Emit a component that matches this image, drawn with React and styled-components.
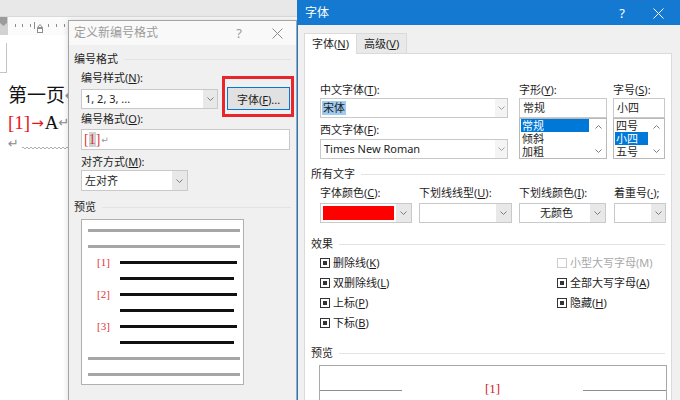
import React from "react";
import styled, { createGlobalStyle } from "styled-components";

const uiFont = `"Noto Sans", "Noto Sans CJK SC", sans-serif`;
const serifFont = `"Liberation Serif", "Noto Sans CJK SC", serif`;

const GlobalStyle = createGlobalStyle`
  * { box-sizing: border-box; }
  body { margin: 0; background: #fff; }
`;

const Chevron = ({ up, color = "#7d7d7d" }) => (
  <svg width="7" height="4" viewBox="0 0 7 4">
    <path
      d={up ? "M0.5 3.5 L3.5 0.5 L6.5 3.5" : "M0.5 0.5 L3.5 3.5 L6.5 0.5"}
      fill="none"
      stroke={color}
      strokeWidth="1"
    />
  </svg>
);

const CloseIcon = ({ color }) => (
  <svg width="11" height="11" viewBox="0 0 11 11">
    <path d="M0.5 0.5 L10.5 10.5 M10.5 0.5 L0.5 10.5" stroke={color} strokeWidth="1" />
  </svg>
);

const RulerScale = () => (
  <svg width="60" height="18" viewBox="0 0 60 18">
    {[7, 14, 22, 40, 48, 56].map((x) => (
      <line key={x} x1={x + 0.5} y1="7" x2={x + 0.5} y2="10" stroke="#8d8d8d" />
    ))}
    <line x1="26.5" y1="5" x2="26.5" y2="12" stroke="#8d8d8d" />
    <path d="M29.5 10.5 L32 7.5 L34.5 10.5 Z" fill="#fff" stroke="#8d8d8d" />
    <rect x="29.5" y="11.5" width="5" height="4" fill="#fff" stroke="#8d8d8d" />
  </svg>
);

const Squiggle = () => (
  <svg width="46" height="4" viewBox="0 0 46 4">
    <path
      d="M0 2 Q1 0 2 2 T4 2 T6 2 T8 2 T10 2 T12 2 T14 2 T16 2 T18 2 T20 2 T22 2 T24 2 T26 2 T28 2 T30 2 T32 2 T34 2 T36 2 T38 2 T40 2 T42 2 T44 2 T46 2"
      fill="none"
      stroke="#9a9a9a"
      strokeWidth="0.8"
    />
  </svg>
);

export default function App() {
  return (
    <>
      <GlobalStyle />
      <Desktop>
        <WordWindow>
          <RibbonEdge />
          <Ruler>
            <RulerMargin>
              <svg width="8" height="18" viewBox="0 0 8 18">
                <path d="M0 0 L7 0 L7 6 L3.5 9 L0 6 Z" fill="#9c9c9c" />
              </svg>
            </RulerMargin>
            <RulerScale />
          </Ruler>
          <Page>
            <CornerMark />
            <DocLine $mt={9}>
              第一页<ParaMark>↵</ParaMark>
            </DocLine>
            <DocLine>
              <RedText>[1]</RedText>
              <Arrow>→</Arrow>A<ParaMark>↵</ParaMark>
            </DocLine>
            <DocLine $small>
              <ParaMark>↵</ParaMark>
              <Squiggle />
            </DocLine>
          </Page>
        </WordWindow>

        <NumberDialog>
          <TitleBar>
            <TitleText>定义新编号格式</TitleText>
            <TitleButton $w={38}>?</TitleButton>
            <TitleButton $w={38}>
              <CloseIcon color="#8c8c8c" />
            </TitleButton>
          </TitleBar>
          <DialogBody>
            <GroupHeader $mt={7}>编号格式</GroupHeader>
            <Indent $pl={7}>
              <FieldLabel $mt={5}>
                编号样式(<Key>N</Key>):
              </FieldLabel>
              <StyleRow>
                <Combo $w={137} $h={20}>
                  <ComboValue>1, 2, 3, ...</ComboValue>
                  <ComboArrow $w={14} $dark>
                    <Chevron />
                  </ComboArrow>
                </Combo>
                <FontButton>
                  字体(<Key>F</Key>)...
                </FontButton>
              </StyleRow>
              <FieldLabel $mt={2}>
                编号格式(<Key>O</Key>):
              </FieldLabel>
              <FormatInput>
                <NumberText>
                  [<Selected>1</Selected>]
                </NumberText>
                <SmallMark>↵</SmallMark>
              </FormatInput>
              <FieldLabel $mt={5}>
                对齐方式(<Key>M</Key>):
              </FieldLabel>
              <Combo $w={107} $h={21} $mt={1}>
                <ComboValue>左对齐</ComboValue>
                <ComboArrow $w={15} $dark>
                  <Chevron />
                </ComboArrow>
              </Combo>
            </Indent>
            <GroupHeader $mt={9}>预览</GroupHeader>
            <ListPreview>
              <PreviewRow>
                <PreviewBar $w={152} $ml={6} $gray />
              </PreviewRow>
              <PreviewRow>
                <PreviewBar $w={152} $ml={6} $gray />
              </PreviewRow>
              {["[1]", "[2]", "[3]"].map((n) => (
                <React.Fragment key={n}>
                  <PreviewRow>
                    <PreviewNumber>{n}</PreviewNumber>
                    <PreviewBar $w={117} />
                  </PreviewRow>
                  <PreviewRow>
                    <PreviewNumber />
                    <PreviewBar $w={114} />
                  </PreviewRow>
                </React.Fragment>
              ))}
              <PreviewRow>
                <PreviewBar $w={152} $ml={6} $gray />
              </PreviewRow>
              <PreviewRow>
                <PreviewBar $w={152} $ml={6} $gray />
              </PreviewRow>
            </ListPreview>
          </DialogBody>
        </NumberDialog>

        <FontDialog>
          <TitleBar $active>
            <TitleText>字体</TitleText>
            <TitleButton $w={36}>?</TitleButton>
            <TitleButton $w={36}>
              <CloseIcon color="#ffffff" />
            </TitleButton>
            <TitleGap />
          </TitleBar>
          <TabList>
            <Tab $selected>
              字体(<Key>N</Key>)
            </Tab>
            <Tab>
              高级(<Key>V</Key>)
            </Tab>
          </TabList>
          <TabPanel>
            <FaceRow>
              <FieldColumn $w={188} $mr={11}>
                <FieldLabel>
                  中文字体(<Key>T</Key>):
                </FieldLabel>
                <Combo $w={188} $h={20} $mt={1}>
                  <ComboValue $pl={1}>
                    <Highlight>宋体</Highlight>
                  </ComboValue>
                  <ComboArrow $w={12}>
                    <Chevron color="#a0a0a0" />
                  </ComboArrow>
                </Combo>
                <FieldLabel $mt={5}>
                  西文字体(<Key>F</Key>):
                </FieldLabel>
                <Combo $w={188} $h={20} $mt={2}>
                  <ComboValue>Times New Roman</ComboValue>
                  <ComboArrow $w={12}>
                    <Chevron color="#a0a0a0" />
                  </ComboArrow>
                </Combo>
              </FieldColumn>
              <FieldColumn $w={88} $mr={6}>
                <FieldLabel>
                  字形(<Key>Y</Key>):
                </FieldLabel>
                <TextBox $mt={1}>常规</TextBox>
                <ListBox>
                  <ListItems>
                    <ListItem $selected>常规</ListItem>
                    <ListItem>倾斜</ListItem>
                    <ListItem>加粗</ListItem>
                  </ListItems>
                  <ScrollColumn $w={16}>
                    <Chevron up />
                    <Chevron />
                  </ScrollColumn>
                </ListBox>
              </FieldColumn>
              <FieldColumn $w={52}>
                <FieldLabel>
                  字号(<Key>S</Key>):
                </FieldLabel>
                <TextBox $mt={1}>小四</TextBox>
                <ListBox>
                  <ListItems>
                    <ListItem>四号</ListItem>
                    <ListItem $selected>小四</ListItem>
                    <ListItem>五号</ListItem>
                  </ListItems>
                  <ScrollColumn $w={15}>
                    <Chevron up />
                    <Chevron />
                  </ScrollColumn>
                </ListBox>
              </FieldColumn>
            </FaceRow>

            <GroupHeader $mt={8} $mr={6}>
              所有文字
            </GroupHeader>
            <AttrRow>
              <FieldColumn $w={92} $mr={7}>
                <FieldLabel>
                  字体颜色(<Key>C</Key>):
                </FieldLabel>
                <Combo $w={92} $h={20} $mt={3}>
                  <Swatch />
                  <ComboArrow $w={15} $dark>
                    <Chevron />
                  </ComboArrow>
                </Combo>
              </FieldColumn>
              <FieldColumn $w={93} $mr={7}>
                <FieldLabel>
                  下划线线型(<Key>U</Key>):
                </FieldLabel>
                <Combo $w={93} $h={20} $mt={3}>
                  <ComboValue />
                  <ComboArrow $w={15} $dark>
                    <Chevron />
                  </ComboArrow>
                </Combo>
              </FieldColumn>
              <FieldColumn $w={87} $mr={8}>
                <FieldLabel>
                  下划线颜色(<Key>I</Key>):
                </FieldLabel>
                <Combo $w={87} $h={20} $mt={3}>
                  <ComboValue $center>无颜色</ComboValue>
                  <ComboArrow $w={15} $dark>
                    <Chevron />
                  </ComboArrow>
                </Combo>
              </FieldColumn>
              <FieldColumn $w={52}>
                <FieldLabel>
                  着重号(<Key>·</Key>);
                </FieldLabel>
                <Combo $w={52} $h={20} $mt={3}>
                  <ComboValue />
                  <ComboArrow $w={14} $dark>
                    <Chevron />
                  </ComboArrow>
                </Combo>
              </FieldColumn>
            </AttrRow>

            <GroupHeader $mt={14} $mr={6}>
              效果
            </GroupHeader>
            <EffectGrid>
              <EffectColumn $w={237}>
                <CheckRow>
                  <CheckBox />
                  <span>
                    删除线(<Key>K</Key>)
                  </span>
                </CheckRow>
                <CheckRow>
                  <CheckBox />
                  <span>
                    双删除线(<Key>L</Key>)
                  </span>
                </CheckRow>
                <CheckRow>
                  <CheckBox />
                  <span>
                    上标(<Key>P</Key>)
                  </span>
                </CheckRow>
                <CheckRow>
                  <CheckBox />
                  <span>
                    下标(<Key>B</Key>)
                  </span>
                </CheckRow>
              </EffectColumn>
              <EffectColumn>
                <CheckRow $disabled>
                  <CheckBox $disabled />
                  <span>小型大写字母(M)</span>
                </CheckRow>
                <CheckRow>
                  <CheckBox />
                  <span>
                    全部大写字母(<Key>A</Key>)
                  </span>
                </CheckRow>
                <CheckRow>
                  <CheckBox />
                  <span>
                    隐藏(<Key>H</Key>)
                  </span>
                </CheckRow>
              </EffectColumn>
            </EffectGrid>

            <GroupHeader $mt={13} $mr={6}>
              预览
            </GroupHeader>
            <FontPreview>
              <SampleRow>
                <SampleRule $w={82} />
                <SampleText>[1]</SampleText>
                <SampleRule $w={83} />
              </SampleRow>
            </FontPreview>
          </TabPanel>
        </FontDialog>
      </Desktop>
    </>
  );
}

// Styled components
const Desktop = styled.div`
  position: relative;
  width: 680px;
  height: 400px;
  overflow: hidden;
  background: #fff;
  font-family: ${uiFont};
  font-size: 11px;
  line-height: 14px;
  color: #1e1e1e;
`;

const WordWindow = styled.div`
  display: flex;
  flex-direction: column;
  height: 100%;
`;

const RibbonEdge = styled.div`
  height: 17px;
  background: #e8e8e8;
  border-bottom: 1px solid #dadada;
`;

const Ruler = styled.div`
  height: 18px;
  display: flex;
  background: #fbfbfb;
`;

const RulerMargin = styled.div`
  width: 8px;
  background: #d2d2d2;
`;

const Page = styled.div`
  flex: 1;
  padding-top: 8px;
  background: #fff;
`;

const CornerMark = styled.div`
  width: 7px;
  height: 30px;
  border-right: 1px solid #c4c4c4;
  border-bottom: 1px solid #c4c4c4;
`;

const DocLine = styled.div`
  display: flex;
  align-items: center;
  height: ${(p) => (p.$small ? 16 : 27)}px;
  margin-top: ${(p) => p.$mt || 0}px;
  padding-left: 8px;
  font-family: ${serifFont};
  font-size: ${(p) => (p.$small ? 14 : 19)}px;
  color: #111;
  white-space: nowrap;
  svg {
    margin: 8px 0 0 3px;
  }
`;

const RedText = styled.span`
  color: #e8141c;
`;

const Arrow = styled.span`
  color: #e8141c;
  font-family: "DejaVu Sans", sans-serif;
  font-size: 15px;
  margin: 0 1px;
`;

const ParaMark = styled.span`
  color: #8a8a8a;
  font-family: "DejaVu Sans", sans-serif;
  font-size: 13px;
`;

const NumberDialog = styled.section`
  position: absolute;
  left: 68px;
  top: 20px;
  width: 229px;
  height: 400px;
  display: flex;
  flex-direction: column;
  background: #f0f0f0;
  border: 1px solid #a5a5a5;
  box-shadow: 0 0 6px rgba(0, 0, 0, 0.15);
`;

const FontDialog = styled.section`
  position: absolute;
  left: 297px;
  top: 0;
  width: 384px;
  height: 410px;
  display: flex;
  flex-direction: column;
  background: #f0f0f0;
  border: 1px solid #1a78cf;
`;

const TitleBar = styled.header`
  flex: none;
  height: 24px;
  display: flex;
  align-items: center;
  padding-left: ${(p) => (p.$active ? 7 : 5)}px;
  background: ${(p) => (p.$active ? "#1479d1" : "#f9f9f9")};
  color: ${(p) => (p.$active ? "#fff" : "#9b9b9b")};
  font-size: 12px;
`;

const TitleText = styled.span`
  flex: 1;
`;

const TitleButton = styled.span`
  width: ${(p) => p.$w}px;
  height: 24px;
  display: flex;
  align-items: center;
  justify-content: center;
  font-size: 13px;
`;

const TitleGap = styled.span`
  width: 4px;
`;

const DialogBody = styled.div`
  flex: 1;
  padding: 0 5px;
`;

const GroupHeader = styled.div`
  display: flex;
  align-items: center;
  height: 14px;
  margin-top: ${(p) => p.$mt || 0}px;
  margin-right: ${(p) => p.$mr || 0}px;
  color: #1e1e1e;
  &::after {
    content: "";
    flex: 1;
    height: 1px;
    margin-left: 6px;
    background: #e3e3e3;
  }
`;

const Indent = styled.div`
  padding-left: ${(p) => p.$pl}px;
`;

const FieldLabel = styled.div`
  height: 14px;
  white-space: nowrap;
  margin-top: ${(p) => p.$mt || 0}px;
`;

const Key = styled.span`
  text-decoration: underline;
  text-underline-offset: 1px;
`;

const StyleRow = styled.div`
  display: flex;
  align-items: center;
  height: 23px;
  margin-top: 2px;
  gap: 9px;
`;

const Combo = styled.div`
  display: flex;
  width: ${(p) => p.$w}px;
  height: ${(p) => p.$h}px;
  margin-top: ${(p) => p.$mt || 0}px;
  background: #fff;
  border: 1px solid #c9c9c9;
`;

const ComboValue = styled.div`
  flex: 1;
  display: flex;
  align-items: center;
  justify-content: ${(p) => (p.$center ? "center" : "flex-start")};
  padding-left: ${(p) => (p.$pl !== undefined ? p.$pl : 3)}px;
  white-space: nowrap;
  overflow: hidden;
`;

const ComboArrow = styled.div`
  width: ${(p) => p.$w}px;
  display: flex;
  align-items: center;
  justify-content: center;
  background: ${(p) => (p.$dark ? "#e8e8e8" : "#f4f4f4")};
`;

const Highlight = styled.span`
  background: #9fcbf1;
  padding: 0 1px;
`;

const FontButton = styled.button`
  position: relative;
  width: 63px;
  height: 23px;
  padding: 0;
  font-family: ${uiFont};
  font-size: 11px;
  color: #1e1e1e;
  background: #e1e1e1;
  border: 1px solid #0078d7;
  &::after {
    content: "";
    position: absolute;
    top: -12px;
    left: -6px;
    right: -5px;
    bottom: -8px;
    border: 3px solid #e8262b;
  }
`;

const FormatInput = styled.div`
  display: flex;
  align-items: center;
  width: 209px;
  height: 21px;
  margin-top: 3px;
  padding-left: 2px;
  background: #fff;
  border: 1px solid #c9c9c9;
`;

const NumberText = styled.span`
  font-family: ${serifFont};
  font-size: 14px;
  line-height: 16px;
  color: #e0363b;
`;

const Selected = styled.span`
  background: #d2d2d2;
`;

const SmallMark = styled.span`
  font-family: "DejaVu Sans", sans-serif;
  font-size: 9px;
  color: #999;
  margin-left: 1px;
`;

const ListPreview = styled.div`
  width: 163px;
  height: 166px;
  margin: 5px 0 0 7px;
  padding-top: 2px;
  background: #fff;
  border: 1px solid #b0b0b0;
`;

const PreviewRow = styled.div`
  display: flex;
  align-items: center;
  height: 16px;
`;

const PreviewBar = styled.div`
  width: ${(p) => p.$w}px;
  height: 3px;
  margin-left: ${(p) => p.$ml || 0}px;
  background: ${(p) => (p.$gray ? "#a6a6a6" : "#111")};
`;

const PreviewNumber = styled.span`
  width: 38px;
  padding-left: 15px;
  font-family: ${serifFont};
  font-size: 11px;
  color: #e0363b;
`;

const TabList = styled.div`
  display: flex;
  align-items: flex-end;
  height: 20px;
  margin-top: 8px;
  padding-left: 6px;
  position: relative;
  z-index: 1;
`;

const Tab = styled.div`
  height: ${(p) => (p.$selected ? 21 : 20)}px;
  margin-bottom: ${(p) => (p.$selected ? -1 : 0)}px;
  padding: 3px 7px 0;
  background: ${(p) => (p.$selected ? "#fff" : "#e9e9e9")};
  border: 1px solid #dadada;
  border-bottom: none;
  border-left: ${(p) => (p.$selected ? "1px solid #dadada" : "none")};
`;

const TabPanel = styled.div`
  flex: 1;
  margin: 0 8px 0 6px;
  padding: 29px 0 0 6px;
  background: #fff;
  border: 1px solid #dadada;
`;

const FaceRow = styled.div`
  display: flex;
  align-items: flex-start;
  padding-left: 9px;
`;

const AttrRow = styled.div`
  display: flex;
  align-items: flex-start;
  padding-left: 9px;
  margin-top: 5px;
`;

const FieldColumn = styled.div`
  display: flex;
  flex-direction: column;
  width: ${(p) => p.$w}px;
  margin-right: ${(p) => p.$mr || 0}px;
`;

const TextBox = styled.div`
  height: 20px;
  margin-top: ${(p) => p.$mt || 0}px;
  padding-left: 3px;
  display: flex;
  align-items: center;
  background: #fff;
  border: 1px solid #c9c9c9;
`;

const ListBox = styled.div`
  display: flex;
  height: 41px;
  background: #fff;
  border: 1px solid #b9b9b9;
  overflow: hidden;
`;

const ListItems = styled.div`
  flex: 1;
  padding: 0 1px;
`;

const ListItem = styled.div`
  height: 13px;
  line-height: 13px;
  padding-left: 1px;
  overflow: hidden;
  background: ${(p) => (p.$selected ? "#0078d7" : "transparent")};
  color: ${(p) => (p.$selected ? "#fff" : "#1e1e1e")};
`;

const ScrollColumn = styled.div`
  width: ${(p) => p.$w}px;
  display: flex;
  flex-direction: column;
  justify-content: space-between;
  align-items: center;
  padding: 6px 0 5px;
`;

const Swatch = styled.div`
  flex: 1;
  margin: 2px;
  background: #ff0000;
`;

const EffectGrid = styled.div`
  display: flex;
  padding-left: 9px;
  margin-top: 2px;
`;

const EffectColumn = styled.div`
  display: flex;
  flex-direction: column;
  width: ${(p) => (p.$w ? `${p.$w}px` : "auto")};
`;

const CheckRow = styled.div`
  display: flex;
  align-items: center;
  gap: 3px;
  height: 20px;
  color: ${(p) => (p.$disabled ? "#a8a8a8" : "#1e1e1e")};
`;

const CheckBox = styled.span`
  position: relative;
  width: 10px;
  height: 10px;
  background: #fff;
  border: 1px solid ${(p) => (p.$disabled ? "#cccccc" : "#333")};
  &::after {
    content: "";
    position: absolute;
    left: 2px;
    top: 2px;
    width: 4px;
    height: 4px;
    background: ${(p) => (p.$disabled ? "transparent" : "#333")};
  }
`;

const FontPreview = styled.div`
  width: 348px;
  height: 60px;
  margin: 5px 0 0 8px;
  padding-top: 15px;
  background: #fff;
  border: 1px solid #a8a8a8;
`;

const SampleRow = styled.div`
  display: flex;
  align-items: center;
  height: 16px;
`;

const SampleRule = styled.div`
  width: ${(p) => p.$w}px;
  height: 1px;
  margin-top: 3px;
  background: #8e8e8e;
`;

const SampleText = styled.span`
  flex: 1;
  text-align: center;
  font-family: ${serifFont};
  font-size: 13px;
  color: #d7141c;
`;
